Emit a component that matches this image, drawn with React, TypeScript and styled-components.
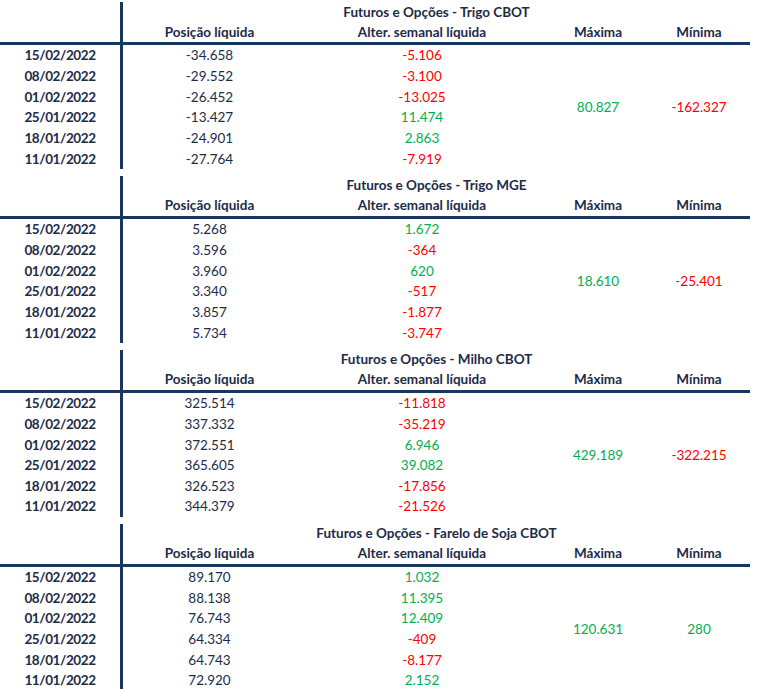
import React from 'react'
import styled, { createGlobalStyle } from 'styled-components'

const NAVY = '#17375e'
const TEXT = '#1c2b48'
const RED = '#ff0000'
const GREEN = '#00b050'

type Row = {
  date: string
  position: string
  change: string
}

type Block = {
  title: string
  rows: Row[]
  max: string
  min: string
}

const dates = [
  '15/02/2022',
  '08/02/2022',
  '01/02/2022',
  '25/01/2022',
  '18/01/2022',
  '11/01/2022',
]

const makeRows = (values: [string, string][]): Row[] =>
  values.map(([position, change], i) => ({ date: dates[i], position, change }))

const blocks: Block[] = [
  {
    title: 'Futuros e Opções - Trigo CBOT',
    rows: makeRows([
      ['-34.658', '-5.106'],
      ['-29.552', '-3.100'],
      ['-26.452', '-13.025'],
      ['-13.427', '11.474'],
      ['-24.901', '2.863'],
      ['-27.764', '-7.919'],
    ]),
    max: '80.827',
    min: '-162.327',
  },
  {
    title: 'Futuros e Opções - Trigo MGE',
    rows: makeRows([
      ['5.268', '1.672'],
      ['3.596', '-364'],
      ['3.960', '620'],
      ['3.340', '-517'],
      ['3.857', '-1.877'],
      ['5.734', '-3.747'],
    ]),
    max: '18.610',
    min: '-25.401',
  },
  {
    title: 'Futuros e Opções - Milho CBOT',
    rows: makeRows([
      ['325.514', '-11.818'],
      ['337.332', '-35.219'],
      ['372.551', '6.946'],
      ['365.605', '39.082'],
      ['326.523', '-17.856'],
      ['344.379', '-21.526'],
    ]),
    max: '429.189',
    min: '-322.215',
  },
  {
    title: 'Futuros e Opções - Farelo de Soja CBOT',
    rows: makeRows([
      ['89.170', '1.032'],
      ['88.138', '11.395'],
      ['76.743', '12.409'],
      ['64.334', '-409'],
      ['64.743', '-8.177'],
      ['72.920', '2.152'],
    ]),
    max: '120.631',
    min: '280',
  },
]

const tone = (value: string): string => (value.startsWith('-') ? RED : GREEN)

const App = (): JSX.Element => {
  return (
    <>
      <GlobalStyle />
      <Page>
        {blocks.map(block => (
          <Table key={block.title}>
            <Blank />
            <Title>{block.title}</Title>

            <HeadCell />
            <HeadCell $divider>Posição líquida</HeadCell>
            <HeadCell>Alter. semanal líquida</HeadCell>
            <HeadCell>Máxima</HeadCell>
            <HeadCell>Mínima</HeadCell>

            {block.rows.map((row, i) => (
              <React.Fragment key={row.date}>
                <DateCell style={{ gridRow: i + 3 }}>{row.date}</DateCell>
                <ValueCell $divider style={{ gridRow: i + 3 }}>
                  {row.position}
                </ValueCell>
                <ValueCell $color={tone(row.change)} style={{ gridRow: i + 3 }}>
                  {row.change}
                </ValueCell>
              </React.Fragment>
            ))}

            <RangeCell $col={4} $color={tone(block.max)}>
              {block.max}
            </RangeCell>
            <RangeCell $col={5} $color={tone(block.min)}>
              {block.min}
            </RangeCell>
          </Table>
        ))}
      </Page>
    </>
  )
}

const GlobalStyle = createGlobalStyle`
  html, body {
    margin: 0;
    padding: 0;
    background: #ffffff;
    overflow: hidden;
  }
  body {
    font-family: Lato, "Open Sans", sans-serif;
    font-size: 13.5px;
    color: ${TEXT};
  }
`

const Page = styled.div`
  width: 750px;
  display: flex;
  flex-direction: column;
`

const Table = styled.div`
  display: grid;
  grid-template-columns: 120px 176px 252px 100px 102px;
  grid-template-rows: 19px 24px repeat(6, 20.67px);
  padding-top: 2px;
  margin-bottom: 5px;
`

const Blank = styled.div`
  grid-column: 1;
  grid-row: 1;
`

const Title = styled.div`
  grid-column: 2 / 6;
  grid-row: 1;
  border-left: 3px solid ${NAVY};
  display: flex;
  align-items: center;
  justify-content: center;
  font-weight: 700;
`

const HeadCell = styled.div<{ $divider?: boolean }>`
  grid-row: 2;
  border-bottom: 3px solid ${NAVY};
  border-left: ${({ $divider }) => ($divider ? `3px solid ${NAVY}` : 'none')};
  display: flex;
  align-items: center;
  justify-content: center;
  font-weight: 700;
`

const DateCell = styled.div`
  grid-column: 1;
  display: flex;
  align-items: center;
  justify-content: center;
  font-weight: 700;
  letter-spacing: -0.4px;
`

const ValueCell = styled.div<{ $divider?: boolean; $color?: string }>`
  border-left: ${({ $divider }) => ($divider ? `3px solid ${NAVY}` : 'none')};
  display: flex;
  align-items: center;
  justify-content: center;
  color: ${({ $color }) => $color ?? TEXT};
`

const RangeCell = styled.div<{ $col: number; $color: string }>`
  grid-column: ${({ $col }) => $col};
  grid-row: 3 / 9;
  display: flex;
  align-items: center;
  justify-content: center;
  color: ${({ $color }) => $color};
`

export default App
